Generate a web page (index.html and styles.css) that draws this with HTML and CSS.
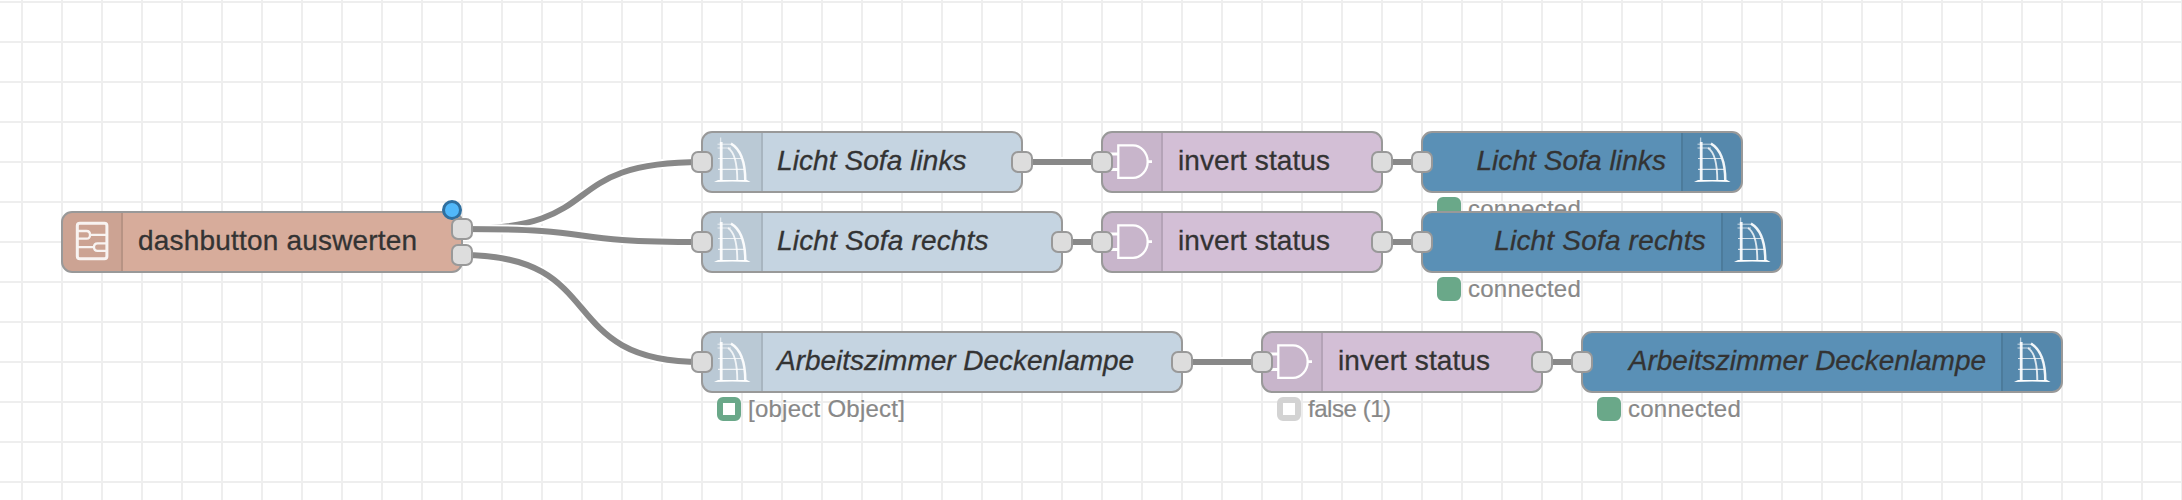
FILE: index.html
```html
<!DOCTYPE html>
<html lang="de">
<head>
<meta charset="utf-8">
<title>Flow</title>
<link rel="stylesheet" href="styles.css">
</head>
<body>
<svg class="defs" width="0" height="0" aria-hidden="true">
  <symbol id="sail" viewBox="0 0 60 60">
    <g fill="none" stroke="#fff">
      <path d="M19.200 10V49" stroke-width="2.800" opacity=".92"/>
      <path d="M18.600 5.500V12" stroke-width="1.300" opacity=".6"/>
      <path d="M29 11.700C38 17 43.300 30 43.300 49" stroke-width="2.500" opacity=".92"/>
      <path d="M26 16C34 21 35.300 37 35.300 49" stroke-width="1.900" opacity=".8"/>
      <path d="M15.500 12.200H30M15.500 16H29" stroke-width="1" opacity=".65"/>
      <path d="M16 26.500H39.500M16 37.400H42" stroke-width="1.200" opacity=".75"/>
    </g>
    <path d="M12 50L16 48H45L48.500 50Q30 48.800 12 50Z" fill="#fff"/>
  </symbol>
  <symbol id="gate" viewBox="0 0 60 60">
    <g fill="none" stroke="#fff">
      <path d="M16.300 13.400H31C39 13.400 45.700 21 45.700 29.700S39 45.900 31 45.900H16.300Z" stroke-width="2.300"/>
      <path d="M8 22H16M8 37.500H16M46 29.700H50" stroke-width="2.800"/>
    </g>
  </symbol>
  <symbol id="subflow" viewBox="0 0 60 60">
    <g fill="none" stroke="#fff" opacity=".88">
      <rect x="15.300" y="11.200" width="29.600" height="35.600" rx="2.500" stroke-width="3"/>
      <path d="M15.300 19H24.500Q28 19 28 22.900T24.500 26.700H15.300M28 22.900H45M45 31.300H35.500Q32 31.300 32 35.100T35.500 38.900H45M32 35.100H15.300" stroke-width="2.300"/>
    </g>
  </symbol>
</svg>

<main class="canvas">
  <svg class="wires" width="2182" height="500" viewBox="0 0 2182 500">
    <path class="wire-bg" d="M462 229C612 229 552 162 702 162"/><path class="wire" d="M462 229C612 229 552 162 702 162"/>
    <path class="wire-bg" d="M462 229C612 229 552 242 702 242"/><path class="wire" d="M462 229C612 229 552 242 702 242"/>
    <path class="wire-bg" d="M462 255C612 255 552 362 702 362"/><path class="wire" d="M462 255C612 255 552 362 702 362"/>
    <path class="wire-bg" d="M1022 162H1102M1382 162H1422M1062 242H1102M1382 242H1422M1182 362H1262M1542 362H1582"/>
    <path class="wire" d="M1022 162H1102M1382 162H1422M1062 242H1102M1382 242H1422M1182 362H1262M1542 362H1582"/>
  </svg>

  <div class="node subflow n-dash">
    <span class="pane"><svg><use href="#subflow"/></svg></span>
    <span class="label">dashbutton auswerten</span>
    <i class="changed"></i><i class="port out upper"></i><i class="port out lower"></i>
  </div>

  <div class="node source n-in1">
    <span class="pane"><svg><use href="#sail"/></svg></span>
    <span class="label">Licht Sofa links</span>
    <i class="port in"></i><i class="port out"></i>
  </div>
  <div class="node invert n-inv1">
    <span class="pane"><svg><use href="#gate"/></svg></span>
    <span class="label">invert status</span>
    <i class="port in"></i><i class="port out"></i>
  </div>
  <div class="node sink n-out1">
    <span class="pane"><svg><use href="#sail"/></svg></span>
    <span class="label">Licht Sofa links</span>
    <i class="port in"></i>
    <div class="status"><i class="dot green"></i>connected</div>
  </div>

  <div class="node source n-in2">
    <span class="pane"><svg><use href="#sail"/></svg></span>
    <span class="label wide">Licht Sofa rechts</span>
    <i class="port in"></i><i class="port out"></i>
  </div>
  <div class="node invert n-inv2">
    <span class="pane"><svg><use href="#gate"/></svg></span>
    <span class="label">invert status</span>
    <i class="port in"></i><i class="port out"></i>
  </div>
  <div class="node sink n-out2">
    <span class="pane"><svg><use href="#sail"/></svg></span>
    <span class="label wide">Licht Sofa rechts</span>
    <i class="port in"></i>
    <div class="status"><i class="dot green"></i>connected</div>
  </div>

  <div class="node source n-in3">
    <span class="pane"><svg><use href="#sail"/></svg></span>
    <span class="label tight">Arbeitszimmer Deckenlampe</span>
    <i class="port in"></i><i class="port out"></i>
    <div class="status"><i class="dot green ring"></i>[object Object]</div>
  </div>
  <div class="node invert n-inv3">
    <span class="pane"><svg><use href="#gate"/></svg></span>
    <span class="label">invert status</span>
    <i class="port in"></i><i class="port out"></i>
    <div class="status narrow"><i class="dot grey ring"></i>false (1)</div>
  </div>
  <div class="node sink n-out3">
    <span class="pane"><svg><use href="#sail"/></svg></span>
    <span class="label tight">Arbeitszimmer Deckenlampe</span>
    <i class="port in"></i>
    <div class="status"><i class="dot green"></i>connected</div>
  </div>
</main>
</body>
</html>
```
FILE: styles.css
```css
* { box-sizing: border-box; }
body { margin: 0; font-family: "Liberation Sans", Arial, sans-serif; }
.defs { position: absolute; }

.canvas {
  position: relative;
  width: 2182px;
  height: 500px;
  overflow: hidden;
  background-color: #fff;
  background-image:
    linear-gradient(to right, #eee 2px, transparent 2px),
    linear-gradient(to bottom, #eee 2px, transparent 2px);
  background-size: 40px 40px;
  background-position: 21px 1px;
}

.wires { position: absolute; left: 0; top: 0; }
.wire, .wire-bg { fill: none; }
.wire { stroke: #888; stroke-width: 6; }
.wire-bg { stroke: #fff; stroke-width: 10; }

.node {
  position: absolute;
  display: flex;
  align-items: stretch;
  height: 62px;
  border: 2px solid #999;
  border-radius: 11px;
  color: #333;
  font-size: 28px;
}
.subflow { background: #d7ac9b; }
.source { background: #c5d4e1; }
.invert { background: #d3bfd6; }
.sink { background: #5a90b6; flex-direction: row-reverse; }

.n-dash { left: 61px; top: 211px; width: 402px; }
.n-in1 { left: 701px; top: 131px; width: 322px; }
.n-inv1 { left: 1101px; top: 131px; width: 282px; }
.n-out1 { left: 1421px; top: 131px; width: 322px; }
.n-in2 { left: 701px; top: 211px; width: 362px; }
.n-inv2 { left: 1101px; top: 211px; width: 282px; }
.n-out2 { left: 1421px; top: 211px; width: 362px; }
.n-in3 { left: 701px; top: 331px; width: 482px; }
.n-inv3 { left: 1261px; top: 331px; width: 282px; }
.n-out3 { left: 1581px; top: 331px; width: 482px; }

.pane {
  flex: none;
  width: 60px;
  background: rgba(0, 0, 0, .05);
  border-right: 2px solid rgba(0, 0, 0, .1);
  border-radius: 9px 0 0 9px;
}
.sink .pane {
  border-right: 0;
  border-left: 2px solid rgba(0, 0, 0, .1);
  border-radius: 0 9px 9px 0;
}
.pane svg { display: block; width: 60px; height: 60px; margin: -1px 0 0 -1px; }

.label {
  padding: 0 15px;
  line-height: 56px;
  white-space: nowrap;
  letter-spacing: .08px;
  -webkit-text-stroke: .3px currentColor;
}
.source .label, .sink .label { font-style: italic; }
.source .label { padding-left: 14px; }
.subflow .label { letter-spacing: .19px; }
.label.wide { letter-spacing: .19px; }
.label.tight { letter-spacing: -.03px; }

.port {
  position: absolute;
  width: 22px;
  height: 22px;
  top: 18px;
  border: 2px solid #999;
  border-radius: 7px;
  background: #ddd;
}
.in { left: -12px; }
.out { right: -12px; }
.upper { top: 5px; }
.lower { top: 31px; }

.changed {
  position: absolute;
  right: -1px;
  top: -13px;
  width: 20px;
  height: 20px;
  border: 3px solid #2f6f9f;
  border-radius: 50%;
  background: #51b8fa;
}

.status {
  position: absolute;
  left: 14px;
  top: 64px;
  display: flex;
  align-items: center;
  gap: 7px;
  height: 24px;
  color: #888;
  font-size: 24px;
  line-height: 24px;
  letter-spacing: .25px;
  white-space: nowrap;
  -webkit-text-stroke: .2px currentColor;
}
.status.narrow { letter-spacing: -.45px; }
.dot { width: 24px; height: 24px; border: 6px solid; border-radius: 6px; }
.green { border-color: #6aa889; background-color: #6aa889; }
.grey { border-color: #d3d3d3; }
.ring { background-color: #fff; }
```
